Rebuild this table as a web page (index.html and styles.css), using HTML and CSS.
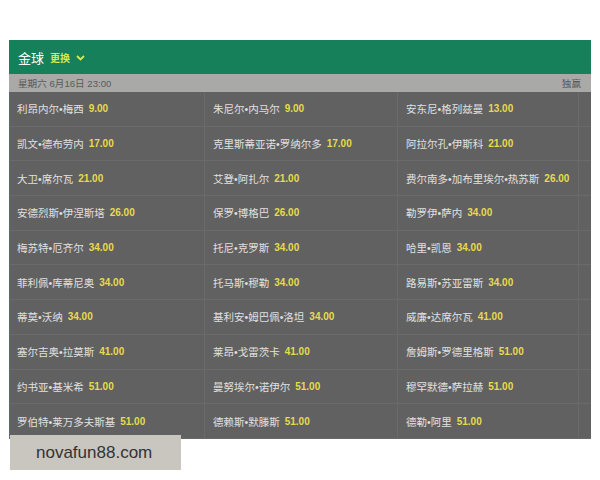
FILE: index.html
```html
<!DOCTYPE html>
<html lang="zh">
<head>
<meta charset="utf-8">
<link rel="stylesheet" href="styles.css">
</head>
<body>
<div class="page">
  <div class="panel">
    <div class="header">
      <span class="title">金球</span>
      <span class="change">更换</span>
      <svg class="chev" width="9" height="6" viewBox="0 0 9 6"><path d="M1 1 L4.5 4.5 L8 1" fill="none" stroke="#d8e84a" stroke-width="1.8"/></svg>
    </div>
    <div class="datebar">
      <span>星期六 6月16日 23:00</span>
      <span>独赢</span>
    </div>
    <div class="grid">
      <div class="cell"><span class="name">利昂内尔•梅西</span><span class="odds">9.00</span></div>
      <div class="cell"><span class="name">朱尼尔•内马尔</span><span class="odds">9.00</span></div>
      <div class="cell last"><span class="name">安东尼•格列兹曼</span><span class="odds">13.00</span></div>
      <div class="cell"><span class="name">凯文•德布劳内</span><span class="odds">17.00</span></div>
      <div class="cell"><span class="name">克里斯蒂亚诺•罗纳尔多</span><span class="odds">17.00</span></div>
      <div class="cell last"><span class="name">阿拉尔孔•伊斯科</span><span class="odds">21.00</span></div>
      <div class="cell"><span class="name">大卫•席尔瓦</span><span class="odds">21.00</span></div>
      <div class="cell"><span class="name">艾登•阿扎尔</span><span class="odds">21.00</span></div>
      <div class="cell last"><span class="name">费尔南多•加布里埃尔•热苏斯</span><span class="odds">26.00</span></div>
      <div class="cell"><span class="name">安德烈斯•伊涅斯塔</span><span class="odds">26.00</span></div>
      <div class="cell"><span class="name">保罗•博格巴</span><span class="odds">26.00</span></div>
      <div class="cell last"><span class="name">勒罗伊•萨内</span><span class="odds">34.00</span></div>
      <div class="cell"><span class="name">梅苏特•厄齐尔</span><span class="odds">34.00</span></div>
      <div class="cell"><span class="name">托尼•克罗斯</span><span class="odds">34.00</span></div>
      <div class="cell last"><span class="name">哈里•凯恩</span><span class="odds">34.00</span></div>
      <div class="cell"><span class="name">菲利佩•库蒂尼奥</span><span class="odds">34.00</span></div>
      <div class="cell"><span class="name">托马斯•穆勒</span><span class="odds">34.00</span></div>
      <div class="cell last"><span class="name">路易斯•苏亚雷斯</span><span class="odds">34.00</span></div>
      <div class="cell"><span class="name">蒂莫•沃纳</span><span class="odds">34.00</span></div>
      <div class="cell"><span class="name">基利安•姆巴佩•洛坦</span><span class="odds">34.00</span></div>
      <div class="cell last"><span class="name">威廉•达席尔瓦</span><span class="odds">41.00</span></div>
      <div class="cell"><span class="name">塞尔吉奥•拉莫斯</span><span class="odds">41.00</span></div>
      <div class="cell"><span class="name">莱昂•戈雷茨卡</span><span class="odds">41.00</span></div>
      <div class="cell last"><span class="name">詹姆斯•罗德里格斯</span><span class="odds">51.00</span></div>
      <div class="cell"><span class="name">约书亚•基米希</span><span class="odds">51.00</span></div>
      <div class="cell"><span class="name">曼努埃尔•诺伊尔</span><span class="odds">51.00</span></div>
      <div class="cell last"><span class="name">穆罕默德•萨拉赫</span><span class="odds">51.00</span></div>
      <div class="cell"><span class="name">罗伯特•莱万多夫斯基</span><span class="odds">51.00</span></div>
      <div class="cell"><span class="name">德赖斯•默滕斯</span><span class="odds">51.00</span></div>
      <div class="cell last"><span class="name">德勒•阿里</span><span class="odds">51.00</span></div>
    </div>
  </div>
  <div class="watermark">novafun88.com</div>
</div>
</body>
</html>
```

FILE: styles.css
```css
html, body {
  margin: 0;
  padding: 0;
  background: #ffffff;
}
.page {
  position: relative;
  padding: 40px 9px 0 9px;
  height: 480px;
  box-sizing: border-box;
  font-family: "Liberation Sans", "Noto Sans CJK SC", sans-serif;
}
.panel {
  width: 582px;
}
.header {
  height: 34px;
  background: #15805a;
  display: flex;
  align-items: center;
  padding-left: 9px;
  gap: 5px;
}
.title {
  font-family: "Noto Sans CJK SC", sans-serif;
  color: #ffffff;
  font-size: 13px;
}
.change {
  font-family: "Noto Sans CJK SC", sans-serif;
  color: #d8e84a;
  font-size: 10px;
  font-weight: 700;
  margin-left: 1px;
}
.chev {
  margin-left: 1px;
  margin-top: 1px;
}
.datebar {
  height: 18px;
  background: #a9a9a8;
  display: flex;
  justify-content: space-between;
  align-items: center;
  padding: 0 10px 0 9px;
  font-family: "Liberation Sans", "Noto Sans CJK SC", sans-serif;
  font-size: 9.6px;
  color: #5a5a5a;
}
.grid {
  display: grid;
  grid-template-columns: 196px 193px 193px;
  grid-auto-rows: 34.7px;
  background: #616161;
  box-shadow: inset 1px 0 0 #5b6a80;
}
.cell {
  display: flex;
  align-items: center;
  padding-left: 8px;
  border-right: 1px solid #6a6a6a;
  border-bottom: 1px solid #6a6a6a;
  white-space: nowrap;
  overflow: hidden;
}
.cell.last {
  border-right: none;
  background: linear-gradient(to right, #616161 0, #616161 180px, #6a6a6a 180px, #6a6a6a 181px, #616161 181px);
}
.name {
  font-family: "Liberation Sans", "Noto Sans CJK SC", sans-serif;
  font-size: 10.5px;
  color: #e0e0e0;
}
.odds {
  font-family: "Liberation Sans", sans-serif;
  color: #e6db4c;
  font-weight: 700;
  font-size: 10px;
  margin-left: 5px;
}
.watermark {
  position: absolute;
  left: 10px;
  top: 435px;
  width: 171px;
  height: 35px;
  background: #c9c5bf;
  color: #333333;
  font-family: "Liberation Sans", sans-serif;
  font-size: 17px;
  display: flex;
  align-items: center;
  padding-left: 26px;
  box-sizing: border-box;
}
```
